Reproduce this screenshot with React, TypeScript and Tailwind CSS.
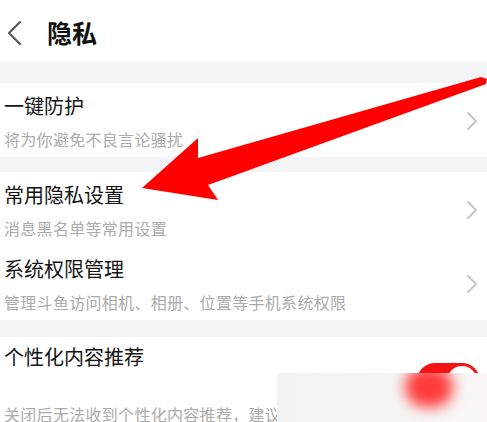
import React from "react";

type Item = {
  title: string;
  desc: string;
};

const GROUP: Item[] = [
  { title: "常用隐私设置", desc: "消息黑名单等常用设置" },
  { title: "系统权限管理", desc: "管理斗鱼访问相机、相册、位置等手机系统权限" },
];

const FONT = { fontFamily: '"Noto Sans CJK SC", "Noto Sans", sans-serif' };

function Chevron() {
  return (
    <svg width="12" height="18" viewBox="0 0 12 18" className="shrink-0">
      <polyline
        points="2,1 10,9 2,17"
        fill="none"
        stroke="#c4c4c4"
        strokeWidth="1.8"
        strokeLinecap="round"
        strokeLinejoin="round"
      />
    </svg>
  );
}

function Row({ item }: { item: Item }) {
  return (
    <div className="h-[74px] flex items-center justify-between pl-[4px] pr-[9px] bg-white">
      <div className="flex flex-col self-start pt-[11px]">
        <span className="text-[20px] leading-[24px] text-[#141414]">{item.title}</span>
        <span className="mt-[11px] text-[16px] leading-[20px] text-[#ababab] tracking-[0.3px]">
          {item.desc}
        </span>
      </div>
      <div className="mt-[2px]">
        <Chevron />
      </div>
    </div>
  );
}

export default function App() {
  return (
    <div className="relative w-[487px] h-[422px] overflow-hidden bg-white" style={FONT}>
      {/* header */}
      <div className="h-[62px] flex items-center">
        <svg width="30" height="30" viewBox="0 0 30 30" className="ml-[1px] mt-[4px]">
          <polyline
            points="19,4 8,15 19,26"
            fill="none"
            stroke="#555"
            strokeWidth="2"
            strokeLinecap="round"
            strokeLinejoin="round"
          />
        </svg>
        <span className="ml-[16px] mt-[4px] text-[25px] font-bold text-[#111]">隐私</span>
      </div>

      <div className="h-[21px] bg-[#f3f4f6]" />
      <Row item={{ title: "一键防护", desc: "将为你避免不良言论骚扰" }} />
      <div className="h-[15px] bg-[#f3f4f6]" />
      {GROUP.map((it) => (
        <Row key={it.title} item={it} />
      ))}
      <div className="h-[17px] bg-[#f3f4f6]" />

      <div className="relative h-[120px] pl-[4px] pt-[8px] flex flex-col">
        <span className="text-[20px] leading-[24px] text-[#141414]">个性化内容推荐</span>
        <span className="mt-[35px] text-[16px] leading-[20px] text-[#ababab] tracking-[0.3px] whitespace-nowrap">
          关闭后无法收到个性化内容推荐，建议
        </span>
        <div className="absolute left-[417px] top-[26px] w-[63px] h-[36px] rounded-full bg-[#f41414] flex items-center justify-end pr-[3px]">
          <div className="w-[30px] h-[30px] rounded-full bg-white" />
        </div>
      </div>

      {/* watermark blur overlay */}
      <div className="absolute left-[277px] top-[373px] right-0 bottom-0 overflow-hidden bg-gradient-to-r from-[#f2f2f2] via-[#f4f4f4] to-[#fbf6f5]">
        <div className="absolute left-[128px] top-[-6px] w-[48px] h-[40px] rounded-full bg-[#ff3a3a] blur-[7px]" />
      </div>

      {/* red annotation arrow */}
      <svg className="absolute inset-0 pointer-events-none" width="487" height="422" viewBox="0 0 487 422">
        <polygon
          points="481,77 198,158 198,138 142,188 218,200 208,185 486,84 487,79"
          fill="#ff0000"
          strokeLinejoin="round"
        />
      </svg>
    </div>
  );
}
